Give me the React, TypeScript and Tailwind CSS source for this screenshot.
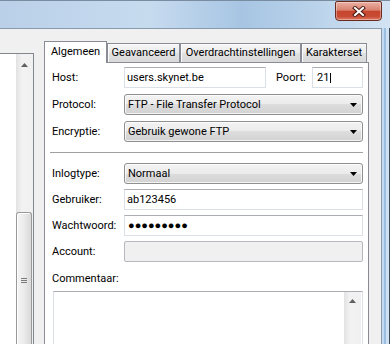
import React from "react";

const F = "font-['Roboto','Liberation_Sans',sans-serif]";

function DownArrow() {
  return (
    <svg width="7" height="4" viewBox="0 0 7 4" className="block">
      <path d="M0 0H7L3.5 4Z" fill="#000" />
    </svg>
  );
}

function UpArrow() {
  return (
    <svg width="7" height="4" viewBox="0 0 7 4" className="block">
      <path d="M0 4H7L3.5 0Z" fill="#606060" />
    </svg>
  );
}

function Combo({ text }: { text: string }) {
  return (
    <div className="flex h-[21px] flex-1 items-center rounded-[3px] border border-[#8e8f8f] bg-[linear-gradient(to_bottom,#f3f3f3_0%,#ebebeb_50%,#dddddd_50%,#d2d2d2_100%)] pl-[3px] pr-[5px] shadow-[inset_0_0_0_1px_rgba(255,255,255,0.75)]">
      <span className="leading-[13px]">{text}</span>
      <span className="ml-auto">
        <DownArrow />
      </span>
    </div>
  );
}

function TextBox({
  children,
  className = "",
}: {
  children?: React.ReactNode;
  className?: string;
}) {
  return (
    <div
      className={`flex h-[21px] items-center border border-[#dbdfe6] border-t-[#abadb3] bg-white pl-[2px] ${className}`}
    >
      {children}
    </div>
  );
}

function Label({ children }: { children: React.ReactNode }) {
  return <div className="w-[72px] shrink-0 leading-[13px]">{children}</div>;
}

function Tab({
  children,
  w,
  selected = false,
}: {
  children: React.ReactNode;
  w: string;
  selected?: boolean;
}) {
  if (selected) {
    return (
      <div
        className={`relative z-10 -mb-px flex h-[22px] ${w} justify-center border border-b-0 border-[#898c95] bg-white pt-[3px] leading-[13px]`}
      >
        {children}
      </div>
    );
  }
  return (
    <div
      className={`flex h-[19px] ${w} justify-center border border-b-0 border-[#898c95] bg-[linear-gradient(to_bottom,#f5f5f5_0%,#ececec_50%,#e1e1e1_50%,#d9d9d9_100%)] pt-[2px] leading-[13px] shadow-[inset_1px_1px_0_#fbfbfb]`}
    >
      {children}
    </div>
  );
}

export default function App() {
  return (
    <div
      className={`relative h-[344px] w-[390px] overflow-hidden text-[11px] leading-[13px] text-black ${F} bg-[linear-gradient(90deg,#b9d0e8_0%,#c7dbef_38%,#a7c5e3_62%,#b9d2ea_80%,#d3e3f3_100%)]`}
    >
      <div className="h-px bg-[#7a8c9f]" />
      <div className="h-[27px]" />

      {/* close button */}
      <div className="absolute left-[335px] top-[1px] flex h-[20px] w-[47px] items-center justify-center rounded-b-[4px] rounded-t-[2px] border border-[#6b2a20] bg-[linear-gradient(to_bottom,#eab1a4_0%,#d9826f_45%,#c7452e_52%,#c84b34_80%,#df7e66_100%)] shadow-[inset_0_0_0_1px_rgba(255,255,255,0.35)]">
        <svg width="14" height="11" viewBox="0 0 14 11" className="block">
          <path d="M3 2L11 9M11 2L3 9" stroke="#4b1a12" strokeWidth="4" strokeLinecap="square" />
          <path d="M3 2L11 9M11 2L3 9" stroke="#ffffff" strokeWidth="2" strokeLinecap="square" />
        </svg>
      </div>

      <div className="flex h-[340px]">
        <div className="flex w-[382px] border-r border-t border-[#8a9bb0] bg-[#f0f0f0]">
          {/* site list */}
          <div className="mt-[24px] flex w-[34px] border-r border-t border-[#828790] bg-white">
            <div className="ml-auto flex w-[17px] flex-col bg-[linear-gradient(90deg,#e2e2e2,#f2f2f2_35%,#f0f0f0)]">
              <div className="flex h-[17px] justify-center pt-[9px]">
                <UpArrow />
              </div>
              <div className="mt-[141px] w-[16px] flex-1 rounded-t-[3px] border border-b-0 border-[#999999] bg-[linear-gradient(90deg,#f5f5f5,#ebebeb_50%,#d9d9d9)] shadow-[inset_1px_1px_0_#ffffff]">
                <div className="mx-auto mt-[65px] flex w-[6px] flex-col gap-px">
                  <div className="h-px bg-[#7a7a7a]" />
                  <div className="h-px bg-[#7a7a7a]" />
                  <div className="h-px bg-[#7a7a7a]" />
                </div>
              </div>
            </div>
          </div>

          {/* tab control */}
          <div className="ml-[10px] mt-[12px] flex w-[325px] flex-col">
            <div className="flex h-[21px] items-end">
              <Tab w="w-[63px]" selected>
                Algemeen
              </Tab>
              <Tab w="w-[73px]">Geavanceerd</Tab>
              <Tab w="w-[121px]">Overdrachtinstellingen</Tab>
              <Tab w="w-[66px]">Karakterset</Tab>
            </div>
            <div className="flex flex-1 flex-col border border-[#898c95] bg-white pl-[7px] pr-[5px]">
              <div className="mt-[4px] flex h-[21px] items-center">
                <Label>Host:</Label>
                <TextBox className="w-[142px]">
                  <span>users.skynet.be</span>
                </TextBox>
                <div className="ml-[10px] leading-[13px]">Poort:</div>
                <TextBox className="ml-auto w-[51px] border-[#a4c9e3] border-t-[#3d7bad] pl-[4px]">
                  <span>21</span>
                  <span className="ml-px h-[10px] w-px bg-black" />
                </TextBox>
              </div>

              <div className="mt-[6px] flex h-[21px] items-center">
                <Label>Protocol:</Label>
                <Combo text="FTP - File Transfer Protocol" />
              </div>

              <div className="mt-[6px] flex h-[21px] items-center">
                <Label>Encryptie:</Label>
                <Combo text="Gebruik gewone FTP" />
              </div>

              <div className="-ml-[2px] mt-[10px] h-px bg-[#a0a0a0]" />

              <div className="mt-[10px] flex h-[21px] items-center">
                <Label>Inlogtype:</Label>
                <Combo text="Normaal" />
              </div>

              <div className="mt-[5px] flex h-[21px] items-center">
                <Label>Gebruiker:</Label>
                <TextBox className="flex-1">
                  <span>ab123456</span>
                </TextBox>
              </div>

              <div className="mt-[5px] flex h-[21px] items-center">
                <Label>Wachtwoord:</Label>
                <TextBox className="flex-1 pl-[3px]">
                  <span className="font-['Liberation_Sans',sans-serif] text-[11px] leading-[13px]">
                    ●●●●●●●●●
                  </span>
                </TextBox>
              </div>

              <div className="mt-[5px] flex h-[21px] items-center">
                <Label>Account:</Label>
                <div className="h-[21px] flex-1 rounded-[2px] border border-[#b5b8bd] bg-[#f0f0f0]" />
              </div>

              <div className="mt-[9px] h-[16px] leading-[16px]">Commentaar:</div>

              <div className="ml-px mt-[4px] flex flex-1 border border-[#dbdfe6] border-t-[#abadb3] bg-white">
                <div className="ml-auto mr-px flex w-[17px] flex-col bg-[linear-gradient(90deg,#e2e2e2,#f2f2f2_35%,#f0f0f0)]">
                  <div className="flex h-[17px] justify-center pt-[7px]">
                    <UpArrow />
                  </div>
                </div>
              </div>
            </div>
          </div>
        </div>

        {/* right window frame */}
        <div className="w-[8px] bg-[linear-gradient(90deg,#c3daf1_0px,#c3daf1_2px,#9cbee0_2px,#9cbee0_4px,#cfe2f4_4px,#cfe2f4_7px,#3e4a57_7px)]" />
      </div>
    </div>
  );
}
